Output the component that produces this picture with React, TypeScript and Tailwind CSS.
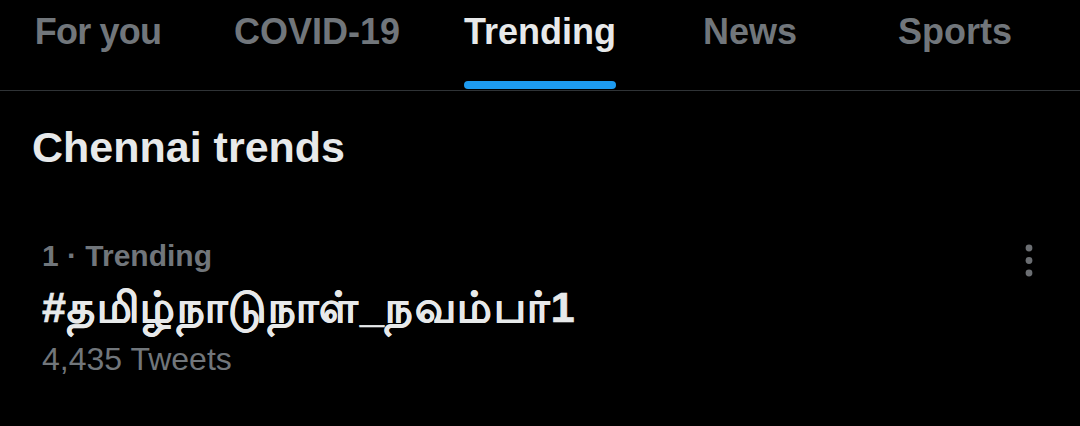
const tabs = [
  { label: 'For you', width: 'w-[196px]', active: false, extra: 'tracking-[-0.8px]' },
  { label: 'COVID-19', width: 'w-[242px]', active: false, extra: '' },
  { label: 'Trending', width: 'w-[204px]', active: true, extra: '' },
  { label: 'News', width: 'w-[216px]', active: false, extra: '' },
  { label: 'Sports', width: 'w-[194px]', active: false, extra: '' },
];

function MoreIcon() {
  return (
    <svg width="12" height="36" viewBox="0 0 12 36" className="text-[#6b6e72]">
      <circle cx="6" cy="6" r="3.4" fill="currentColor" />
      <circle cx="6" cy="18.5" r="3.4" fill="currentColor" />
      <circle cx="6" cy="31" r="3.4" fill="currentColor" />
    </svg>
  );
}

export default function App() {
  return (
    <div className="w-[1080px] h-[426px] bg-black overflow-hidden font-['Liberation_Sans','Noto_Sans',sans-serif] text-[#e7e9ea]">
      {/* top tabs */}
      <div className="flex h-[91px] border-b border-[#2f3336]">
        {tabs.map((t) => (
          <div key={t.label} className={`${t.width} flex justify-center`}>
            <div className="flex flex-col items-stretch">
              <span
                className={`pt-[12px] text-[36px] leading-[40px] font-bold ${t.extra} ${
                  t.active ? 'text-[#e7e9ea]' : 'text-[#71767b]'
                }`}
              >
                {t.label}
              </span>
              <div className="flex-1" />
              {t.active && <div className="h-[8px] rounded-full bg-[#1d9bf0] mb-[1px]" />}
            </div>
          </div>
        ))}
      </div>

      <h2 className="pl-[32px] mt-[30px] text-[43px] leading-[52px] font-bold">Chennai trends</h2>

      {/* trend row */}
      <div className="flex justify-between items-start pl-[42px] pr-[45px] mt-[65px]">
        <div className="flex flex-col">
          <span className="text-[30px] leading-[36px] font-bold text-[#71767b]">1 · Trending</span>
          <span className="mt-[9px] text-[43px] leading-[48px] font-bold tracking-[1.5px] [-webkit-text-stroke:0.6px_#e7e9ea]">
            #தமிழ்நாடுநாள்_நவம்பர்1
          </span>
          <span className="mt-[8px] text-[32px] leading-[40px] text-[#71767b]">4,435 Tweets</span>
        </div>
        <div className="mt-[4px]">
          <MoreIcon />
        </div>
      </div>
    </div>
  );
}
